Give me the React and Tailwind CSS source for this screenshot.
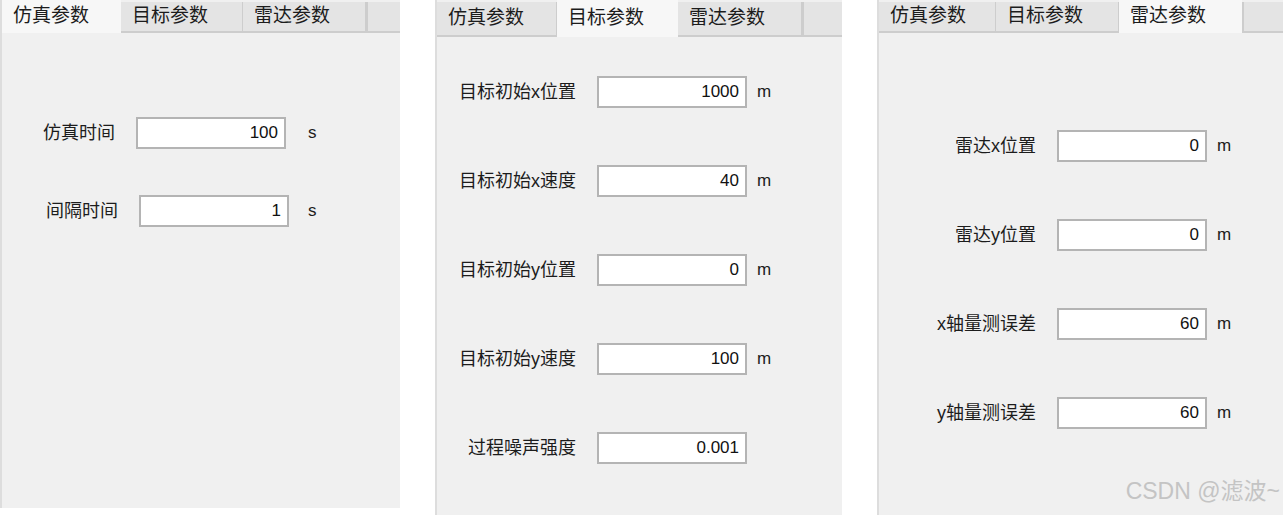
const font = { fontFamily: '"Liberation Sans", "Noto Sans CJK SC", sans-serif' }

function Tabs({ widths, active, height }) {
  const names = ['仿真参数', '目标参数', '雷达参数']
  return (
    <div className="flex shrink-0" style={{ height }}>
      {names.map((name, i) => (
        <div
          key={name}
          style={{ width: widths[i] }}
          className={`flex items-center pl-[11px] text-[19px] text-[#1c1c1c] ${
            i === active
              ? 'bg-[#f7f7f7]'
              : 'bg-[#e4e4e4] border-b-2 border-r border-[#cdcdcd] mt-[2px]'
          }`}
        >
          {name}
        </div>
      ))}
      <div className="flex-1 bg-[#e4e4e4] border-b-2 border-l-2 border-[#cdcdcd] mt-[2px]" />
    </div>
  )
}

function Field({ label, value, unit, labelWidth, shift = 0, unitGap = 10 }) {
  return (
    <div className="flex items-center h-[32px]" style={{ marginLeft: shift }}>
      <div className="text-right text-[18px] text-[#1c1c1c] shrink-0 whitespace-nowrap" style={{ width: labelWidth }}>
        {label}
      </div>
      <div className="ml-[21px] w-[150px] h-[32px] bg-white border-2 border-[#b4b4b4] flex items-center justify-end pr-[6px] text-[17px] text-[#111]">
        {value}
      </div>
      {unit && (
        <div className="text-[17px] text-[#1c1c1c]" style={{ marginLeft: unitGap }}>
          {unit}
        </div>
      )}
    </div>
  )
}

export default function App() {
  return (
    <div className="flex w-[1283px] h-[515px] bg-white overflow-hidden" style={font}>
      <div className="w-[400px] h-[508px] bg-[#f0f0f0] border-l-2 border-[#dddddd] flex flex-col">
        <Tabs widths={[119, 122, 123]} active={0} height={33} />
        <div className="flex flex-col gap-[46px] pt-[84px]">
          <Field label="仿真时间" value="100" unit="s" labelWidth={113} unitGap={22} />
          <Field label="间隔时间" value="1" unit="s" labelWidth={113} shift={3} unitGap={19} />
        </div>
      </div>

      <div className="ml-[35px] w-[407px] h-[515px] bg-[#f0f0f0] border-l-2 border-[#dddddd] flex flex-col">
        <Tabs widths={[120, 121, 124]} active={1} height={37} />
        <div className="flex flex-col gap-[57px] pt-[39px]">
          <Field label="目标初始x位置" value="1000" unit="m" labelWidth={139} />
          <Field label="目标初始x速度" value="40" unit="m" labelWidth={139} />
          <Field label="目标初始y位置" value="0" unit="m" labelWidth={139} />
          <Field label="目标初始y速度" value="100" unit="m" labelWidth={139} />
          <Field label="过程噪声强度" value="0.001" labelWidth={139} />
        </div>
      </div>

      <div className="relative ml-[35px] w-[406px] h-[515px] bg-[#f0f0f0] border-l-2 border-[#dddddd] flex flex-col">
        <Tabs widths={[117, 123, 123]} active={2} height={33} />
        <div className="flex flex-col gap-[57px] pt-[97px]">
          <Field label="雷达x位置" value="0" unit="m" labelWidth={157} />
          <Field label="雷达y位置" value="0" unit="m" labelWidth={157} />
          <Field label="x轴量测误差" value="60" unit="m" labelWidth={157} />
          <Field label="y轴量测误差" value="60" unit="m" labelWidth={157} />
        </div>
        <div className="absolute right-[3px] bottom-[7px] text-[23px] text-[#c4c4c4]">CSDN @滤波~</div>
      </div>
    </div>
  )
}
